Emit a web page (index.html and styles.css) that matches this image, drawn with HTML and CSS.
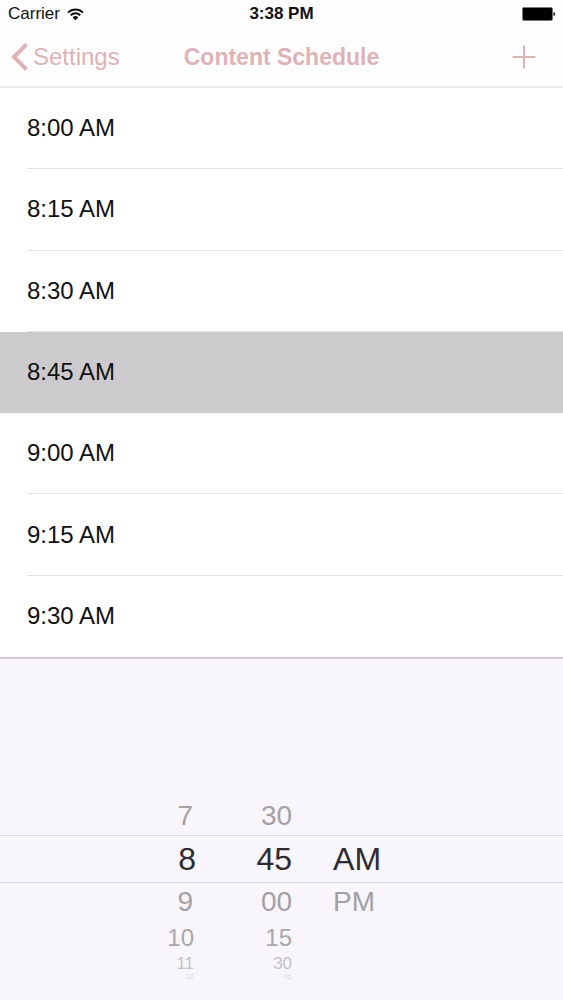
FILE: index.html
```html
<!DOCTYPE html>
<html lang="en">
<head>
    <meta charset="UTF-8">
    <meta name="viewport" content="width=device-width, initial-scale=1.0">
    <title>Content Schedule</title>
    <link rel="stylesheet" href="styles.css">
</head>
<body>
    <header>
        <div class="status-bar">
            <div class="carrier">
                <span>Carrier</span>
                <svg width="17" height="13" viewBox="0 0 17 13" aria-hidden="true">
                    <path d="M1 4.6a10.6 10.6 0 0 1 15 0M3.7 7.3a6.8 6.8 0 0 1 9.6 0" fill="none" stroke="#111" stroke-width="2"/>
                    <path d="M5.6 9.4a4.1 4.1 0 0 1 5.8 0L8.5 12.3z" fill="#111"/>
                </svg>
            </div>
            <span class="clock">3:38 PM</span>
            <svg class="battery" width="34" height="14" viewBox="0 0 34 14" aria-hidden="true">
                <rect x="1.5" y="0.5" width="30" height="13" rx="1.5" fill="#000" stroke="#777"/>
                <path d="M32.5 5q1.5 0 1.5 2t-1.5 2z" fill="#000"/>
            </svg>
        </div>
        <nav class="nav-bar">
            <a class="back" href="#settings">
                <svg width="18" height="28" viewBox="0 0 18 28" aria-hidden="true">
                    <path d="M15.5 1.5L3 14l12.5 12.5" fill="none" stroke="currentColor" stroke-width="4"/>
                </svg>
                <span>Settings</span>
            </a>
            <h1>Content Schedule</h1>
            <button class="add" type="button" aria-label="Add">
                <svg width="24" height="24" viewBox="0 0 24 24" aria-hidden="true">
                    <path d="M12 0.5v23M0.5 12h23" stroke="currentColor" stroke-width="2"/>
                </svg>
            </button>
        </nav>
    </header>

    <ul class="times">
        <li><button type="button">8:00 AM</button></li>
        <li><button type="button">8:15 AM</button></li>
        <li><button type="button">8:30 AM</button></li>
        <li class="selected"><button type="button">8:45 AM</button></li>
        <li><button type="button">9:00 AM</button></li>
        <li><button type="button">9:15 AM</button></li>
        <li><button type="button">9:30 AM</button></li>
    </ul>

    <form class="picker">
        <div class="wheel hour" role="radiogroup" aria-label="Hour">
            <label class="near"><input type="radio" name="hour" value="7">7</label>
            <label class="current"><input type="radio" name="hour" value="8" checked>8</label>
            <label class="near"><input type="radio" name="hour" value="9">9</label>
            <label class="far"><input type="radio" name="hour" value="10">10</label>
            <label class="farther"><input type="radio" name="hour" value="11">11</label>
            <label class="edge"><input type="radio" name="hour" value="12">12</label>
        </div>
        <div class="wheel" role="radiogroup" aria-label="Minute">
            <label class="near"><input type="radio" name="minute" value="prev-30">30</label>
            <label class="current"><input type="radio" name="minute" value="45" checked>45</label>
            <label class="near"><input type="radio" name="minute" value="00">00</label>
            <label class="far"><input type="radio" name="minute" value="15">15</label>
            <label class="farther"><input type="radio" name="minute" value="30">30</label>
            <label class="edge"><input type="radio" name="minute" value="next-45">45</label>
        </div>
        <div class="wheel period" role="radiogroup" aria-label="AM or PM">
            <label class="current"><input type="radio" name="period" value="AM" checked>AM</label>
            <label class="near"><input type="radio" name="period" value="PM">PM</label>
        </div>
    </form>
</body>
</html>
```
FILE: styles.css
```css
* { box-sizing: border-box; }
body { margin: 0; min-height: 100vh; display: flex; flex-direction: column; background: #fff; color: #111; font-family: "Liberation Sans", Arial, sans-serif; font-size: 24px; }
button { font: inherit; color: inherit; background: none; border: none; padding: 0; cursor: pointer; }
svg { display: block; }

header { border-bottom: 2px solid #e9e8ea; background: #fefdfe; }
.status-bar { display: grid; grid-template-columns: 1fr auto 1fr; align-items: center; height: 28px; padding: 0 8px; font-size: 17px; }
.carrier { display: flex; align-items: center; gap: 7px; }
.clock { font-weight: bold; }
.battery { justify-self: end; }

.nav-bar { display: grid; grid-template-columns: 1fr auto 1fr; align-items: center; height: 58px; padding: 0 11px; color: #dfb2b6; }
.back { display: flex; align-items: center; gap: 4px; color: inherit; text-decoration: none; }
.nav-bar h1 { margin: 0; font-size: 23px; }
.add { justify-self: end; padding: 0 16px; }

.times { flex: 1; display: flex; flex-direction: column; margin: 0; padding: 0; list-style: none; }
.times li { flex: 1; display: flex; padding-left: 27px; }
.times button { flex: 1; min-height: 64px; text-align: left; border-bottom: 1px solid #e2e1e3; }
.times .selected { background: #cdcace; }
.times .selected button, .times li:last-child button { border-bottom-color: transparent; }

.picker { display: grid; grid-template-columns: 35% 96px 1fr; padding: 138px 0 19px; background: #f8f6fa; border-top: 2px solid #d3ccd4; }
.wheel { display: flex; flex-direction: column; text-align: right; }
.wheel label { position: relative; padding-right: 1px; cursor: pointer; }
.wheel input { position: absolute; opacity: 0; margin: 0; }
.hour .near { padding-right: 4px; }
.hour .far, .hour .farther, .hour .edge { padding-right: 3px; }
.period { padding-top: 38px; text-align: left; }
.period label { padding-left: 40px; }
.current { height: 48px; line-height: 46px; font-size: 32px; color: #2d2b2f; border-top: 1px solid #d9d7db; border-bottom: 1px solid #d9d7db; }
.near { height: 38px; line-height: 38px; font-size: 28px; color: #a3a1a5; }
.far { height: 34px; line-height: 34px; font-size: 24px; color: #a9a7ab; }
.farther { height: 18px; line-height: 18px; font-size: 17px; color: #c4c2c6; }
.edge { height: 8px; line-height: 8px; font-size: 8px; color: #dddbdf; }
```
